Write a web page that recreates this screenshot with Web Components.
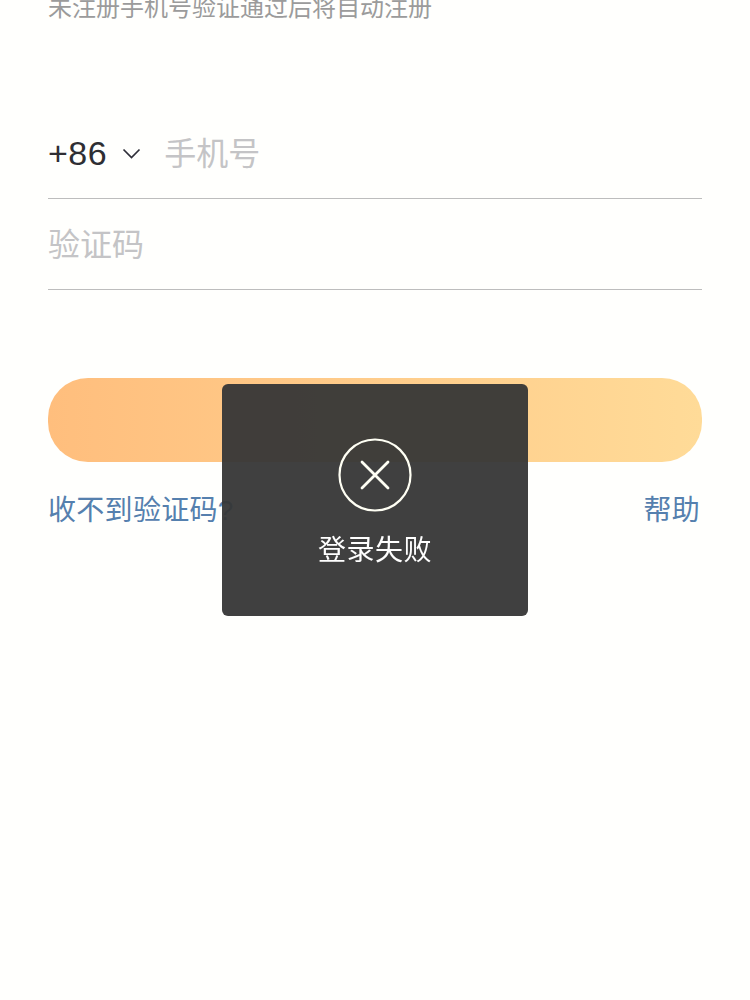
<!DOCTYPE html>
<html lang="zh">
<head>
<meta charset="utf-8">
<title>登录</title>
<style>
    html, body {
        margin: 0;
        height: 1000px;
        overflow: hidden;
        background: #fffffd;
        font-family: "Liberation Sans", "Noto Sans CJK SC", sans-serif;
    }
</style>
</head>
<body>
<login-page>
    <form-field slot="fields" prefix="+86" placeholder="手机号"></form-field>
    <form-field slot="fields" placeholder="验证码"></form-field>
</login-page>
<toast-box message="登录失败"></toast-box>

<script>
class LoginPage extends HTMLElement {
    constructor() {
        super();
        this.attachShadow({ mode: 'open' });
        this.shadowRoot.innerHTML = `
            <style>
                :host {
                    display: block;
                    padding: 0 48px;
                    margin-top: -8px;
                }
                .hint {
                    font-size: 24px;
                    line-height: 32px;
                    color: #9b9b9b;
                    margin-bottom: 84px;
                }
                .submit {
                    height: 84px;
                    border-radius: 40px;
                    margin-top: 88px;
                    background: linear-gradient(90deg, #ffbe7d, #ffdb98);
                }
                .links {
                    display: flex;
                    justify-content: space-between;
                    margin-top: 31px;
                    padding-right: 2px;
                    font-size: 28px;
                    line-height: 36px;
                    color: #5580ae;
                    letter-spacing: 0.3px;
                }
            </style>
            <div class="hint">未注册手机号验证通过后将自动注册</div>
            <slot name="fields"></slot>
            <div class="submit"></div>
            <div class="links">
                <span>收不到验证码?</span>
                <span>帮助</span>
            </div>
        `;
    }
}

class FormField extends HTMLElement {
    constructor() {
        super();
        this.attachShadow({ mode: 'open' });
    }

    connectedCallback() {
        const prefix = this.getAttribute('prefix');
        this.shadowRoot.innerHTML = `
            <style>
                :host {
                    display: flex;
                    align-items: center;
                    height: 90px;
                    border-bottom: 1px solid #bdbdbd;
                }
                .prefix {
                    font-size: 34px;
                    letter-spacing: 0.5px;
                    color: #2e2e33;
                }
                svg {
                    margin: 2px 22px 0 15px;
                }
                .placeholder {
                    font-size: 32px;
                    padding-bottom: 4px;
                    color: #c4c4c6;
                }
            </style>
            ${prefix ? `
                <span class="prefix">${prefix}</span>
                <svg width="20" height="14" viewBox="0 0 20 14" fill="none" stroke="#2e2e38" stroke-width="1.7">
                    <path d="M1.5 2.5 L9.5 10.5 L17.5 2.5"/>
                </svg>
            ` : ''}
            <span class="placeholder">${this.getAttribute('placeholder')}</span>
        `;
    }
}

class ToastBox extends HTMLElement {
    constructor() {
        super();
        this.attachShadow({ mode: 'open' });
    }

    connectedCallback() {
        this.shadowRoot.innerHTML = `
            <style>
                :host {
                    position: fixed;
                    left: 222px;
                    top: 384px;
                    width: 306px;
                    height: 232px;
                    display: flex;
                    flex-direction: column;
                    align-items: center;
                    box-sizing: border-box;
                    padding-top: 54px;
                    border-radius: 6px;
                    background: rgba(54, 54, 54, 0.95);
                    color: #fff;
                }
                svg { display: block; }
                .msg {
                    margin-top: 19px;
                    font-size: 28px;
                    line-height: 40px;
                    letter-spacing: 0.5px;
                }
            </style>
            <svg width="74" height="74" viewBox="0 0 74 74" fill="none" stroke="#fffff4" stroke-width="2.2">
                <circle cx="37" cy="37" r="35.5"/>
                <path d="M24 24 L50 50 M50 24 L24 50" stroke-width="2.8" stroke-linecap="round"/>
            </svg>
            <div class="msg">${this.getAttribute('message')}</div>
        `;
    }
}

customElements.define('login-page', LoginPage);
customElements.define('form-field', FormField);
customElements.define('toast-box', ToastBox);
</script>
</body>
</html>
